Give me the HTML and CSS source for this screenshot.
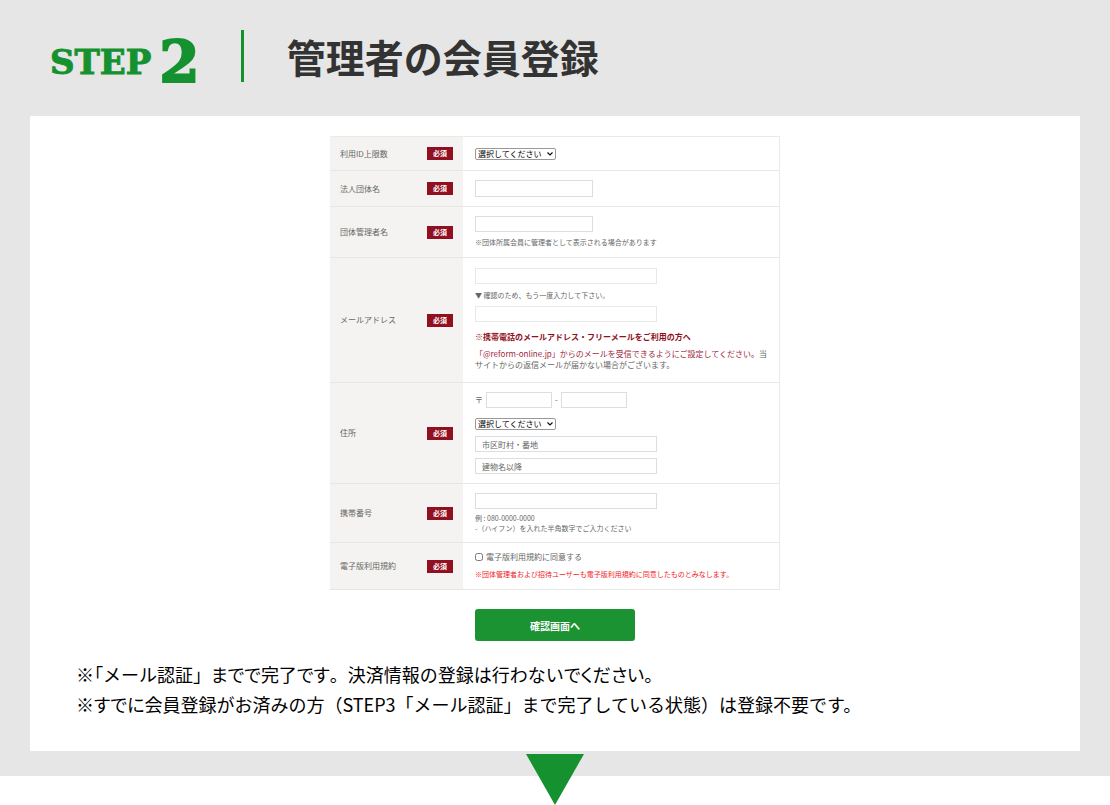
FILE: index.html
```html
<!DOCTYPE html>
<html lang="ja">
<head>
<meta charset="utf-8">
<meta name="viewport" content="width=device-width, initial-scale=1">
<title>管理者の会員登録</title>
<link rel="stylesheet" href="styles.css">
</head>
<body>
<section class="step">
  <header class="step-header">
    <p class="step-label"><span class="step-word">STEP</span><span class="step-number">2</span></p>
    <h2 class="step-title">管理者の会員登録</h2>
  </header>
  <div class="panel">
    <form class="entry">
      <table class="fields">
        <tr>
          <th scope="row"><div class="field-head"><label for="limit">利用ID上限数</label><span class="required">必須</span></div></th>
          <td><div class="stack"><select id="limit" class="select"><option>選択してください</option></select></div></td>
        </tr>
        <tr>
          <th scope="row"><div class="field-head"><label for="corp">法人団体名</label><span class="required">必須</span></div></th>
          <td><div class="stack"><input id="corp" class="input input-medium" type="text"></div></td>
        </tr>
        <tr>
          <th scope="row"><div class="field-head"><label for="manager">団体管理者名</label><span class="required">必須</span></div></th>
          <td><div class="stack"><input id="manager" class="input input-manager" type="text"><p class="hint">※団体所属会員に管理者として表示される場合があります</p></div></td>
        </tr>
        <tr>
          <th scope="row"><div class="field-head"><label for="mail">メールアドレス</label><span class="required">必須</span></div></th>
          <td class="mail-cell"><div class="stack">
            <input id="mail" class="input input-pale" type="email">
            <p class="hint">▼ 確認のため、もう一度入力して下さい。</p>
            <input class="input input-pale" type="email" aria-label="メールアドレス（確認）">
            <p class="notice-title">※携帯電話のメールアドレス・フリーメールをご利用の方へ</p>
            <p class="notice"><span class="accent">「@reform-online.jp」からのメールを受信できるようにご設定してください。</span>当<br>サイトからの返信メールが届かない場合がございます。</p>
          </div></td>
        </tr>
        <tr>
          <th scope="row"><div class="field-head"><label for="zip">住所</label><span class="required">必須</span></div></th>
          <td><div class="stack address">
            <div class="zip"><span class="zip-mark">〒</span><input id="zip" class="input input-zip" type="text"><span>-</span><input class="input input-zip" type="text" aria-label="郵便番号（後半）"></div>
            <select class="select" aria-label="都道府県"><option>選択してください</option></select>
            <input class="input" type="text" placeholder="市区町村・番地" aria-label="市区町村・番地">
            <input class="input" type="text" placeholder="建物名以降" aria-label="建物名以降">
          </div></td>
        </tr>
        <tr>
          <th scope="row"><div class="field-head"><label for="tel">携帯番号</label><span class="required">必須</span></div></th>
          <td><div class="stack"><input id="tel" class="input" type="tel"><p class="hint hint-tight">例 : 080-0000-0000<br>-（ハイフン）を入れた半角数字でご入力ください</p></div></td>
        </tr>
        <tr>
          <th scope="row"><div class="field-head"><span>電子版利用規約</span><span class="required">必須</span></div></th>
          <td><div class="stack terms"><label class="agree"><input class="checkbox" type="checkbox">電子版利用規約に同意する</label><p class="hint alert">※団体管理者および招待ユーザーも電子版利用規約に同意したものとみなします。</p></div></td>
        </tr>
      </table>
      <button class="submit" type="button">確認画面へ</button>
    </form>
    <div class="notes">
      <p><span class="proportional">※「</span>メール認証」<span class="proportional">までで</span>完了<span class="proportional">です</span>。決済情報の登録は行わない<span class="proportional">でください。</span></p>
      <p>※<span class="proportional">すでに</span>会員登録がお済みの方（STEP3「メール認証」まで完了している状態）は登録不要です。</p>
    </div>
  </div>
</section>
<svg class="arrow" viewBox="0 0 58 51" aria-hidden="true"><path d="M0 0H58L29 51Z"/></svg>
</body>
</html>
```
FILE: styles.css
```css
* { box-sizing: border-box; }

body {
  margin: 0;
  background: #fff;
  color: #000;
  font-family: "Noto Sans CJK JP", sans-serif;
}

p, h2 { margin: 0; }

.step {
  padding: 30px 30px 25px;
  background: #e6e6e6;
}

.step-header {
  display: flex;
  align-items: center;
  padding: 0 20px 34px;
}

.step-label {
  display: flex;
  align-items: flex-end;
  gap: 8px;
  height: 52px;
  padding-right: 41px;
  border-right: 3px solid #15922f;
  color: #15922f;
  font-family: "DejaVu Serif", serif;
  font-weight: bold;
}

.step-word {
  font-size: 34px;
  line-height: 40px;
  -webkit-text-stroke: 1px #15922f;
}

.step-number {
  font-size: 58px;
  line-height: 40px;
  -webkit-text-stroke: 2px #15922f;
}

.step-title {
  padding-left: 43px;
  color: #333;
  font-size: 39px;
  line-height: 52px;
  font-weight: bold;
}

.panel {
  padding: 20px 46px 32px;
  background: #fff;
}

.entry {
  display: flex;
  flex-direction: column;
  align-items: center;
  gap: 19px;
  margin-bottom: 18px;
}

.fields {
  width: 450px;
  border: 1px solid #eaeae8;
  border-width: 1px 1px 0 0;
  border-spacing: 0;
  color: #666;
  font-size: 8px;
  line-height: 12px;
}

.fields th,
.fields td {
  border-bottom: 1px solid #e6e6e4;
  vertical-align: middle;
}

.fields th {
  width: 133px;
  padding: 10px;
  background: #f4f3f1;
  font-weight: normal;
  text-align: left;
}

.fields td { padding: 9px 12px; }

.fields .mail-cell { padding: 10px 4px 12px 12px; }

.field-head {
  display: flex;
  align-items: center;
  justify-content: space-between;
}

.required {
  padding: 0 6px;
  background: #900f20;
  color: #fff;
  font-size: 7px;
  font-weight: bold;
  line-height: 13px;
}

.stack {
  display: flex;
  flex-direction: column;
  align-items: flex-start;
  gap: 4px;
}

.input {
  width: 182px;
  height: 16px;
  padding: 0 6px;
  border: 1px solid #ddd;
  background: #fff;
  color: #333;
  font: 8px "Noto Sans CJK JP", sans-serif;
}

.input::placeholder { color: #666; }

.input-pale { border-color: #e8e8e8; }

.input-medium {
  width: 118px;
  height: 17px;
}

.input-manager { width: 118px; }

.input-zip { width: 66px; }

.select {
  width: 81px;
  height: 12px;
  padding: 0 9px 0 2px;
  border: 1px solid #999;
  border-radius: 2px;
  appearance: none;
  background: #fff url("data:image/svg+xml,%3Csvg xmlns='http://www.w3.org/2000/svg' viewBox='0 0 6 4'%3E%3Cpath d='M.5 .5L3 3L5.500 .5' fill='none' stroke='%23111' stroke-width='1.2'/%3E%3C/svg%3E") no-repeat right 2px center / 6px 4px;
  color: #000;
  font: 8px/10px "Noto Sans CJK JP", sans-serif;
}

.hint { font-size: 7px; }

.hint-tight { line-height: 10px; }

.notice-title {
  margin-top: 4px;
  color: #900f20;
  font-weight: bold;
}

.mail-cell .stack { gap: 5px; }

.notice {
  line-height: 11px;
  white-space: nowrap;
}

.accent { color: #a02840; }

.address { gap: 6px; }

.zip {
  display: flex;
  align-items: center;
  gap: 3px;
  margin-bottom: 4px;
}

.terms { gap: 6px; }

.agree {
  display: flex;
  align-items: center;
  gap: 3px;
  line-height: 10px;
}

.checkbox {
  width: 8px;
  height: 8px;
  margin: 0;
}

.alert { color: #f01822; }

.submit {
  width: 160px;
  height: 32px;
  padding: 0;
  border: 0;
  border-radius: 3px;
  background: #1b9332;
  color: #fff;
  font: bold 10px "Noto Sans CJK JP", sans-serif;
}

.notes {
  font-size: 18px;
  line-height: 30px;
}

.proportional { font-feature-settings: "palt"; }

.arrow {
  display: block;
  position: relative;
  width: 58px;
  height: 51px;
  margin: -22px auto 0;
  fill: #15922f;
}
```
